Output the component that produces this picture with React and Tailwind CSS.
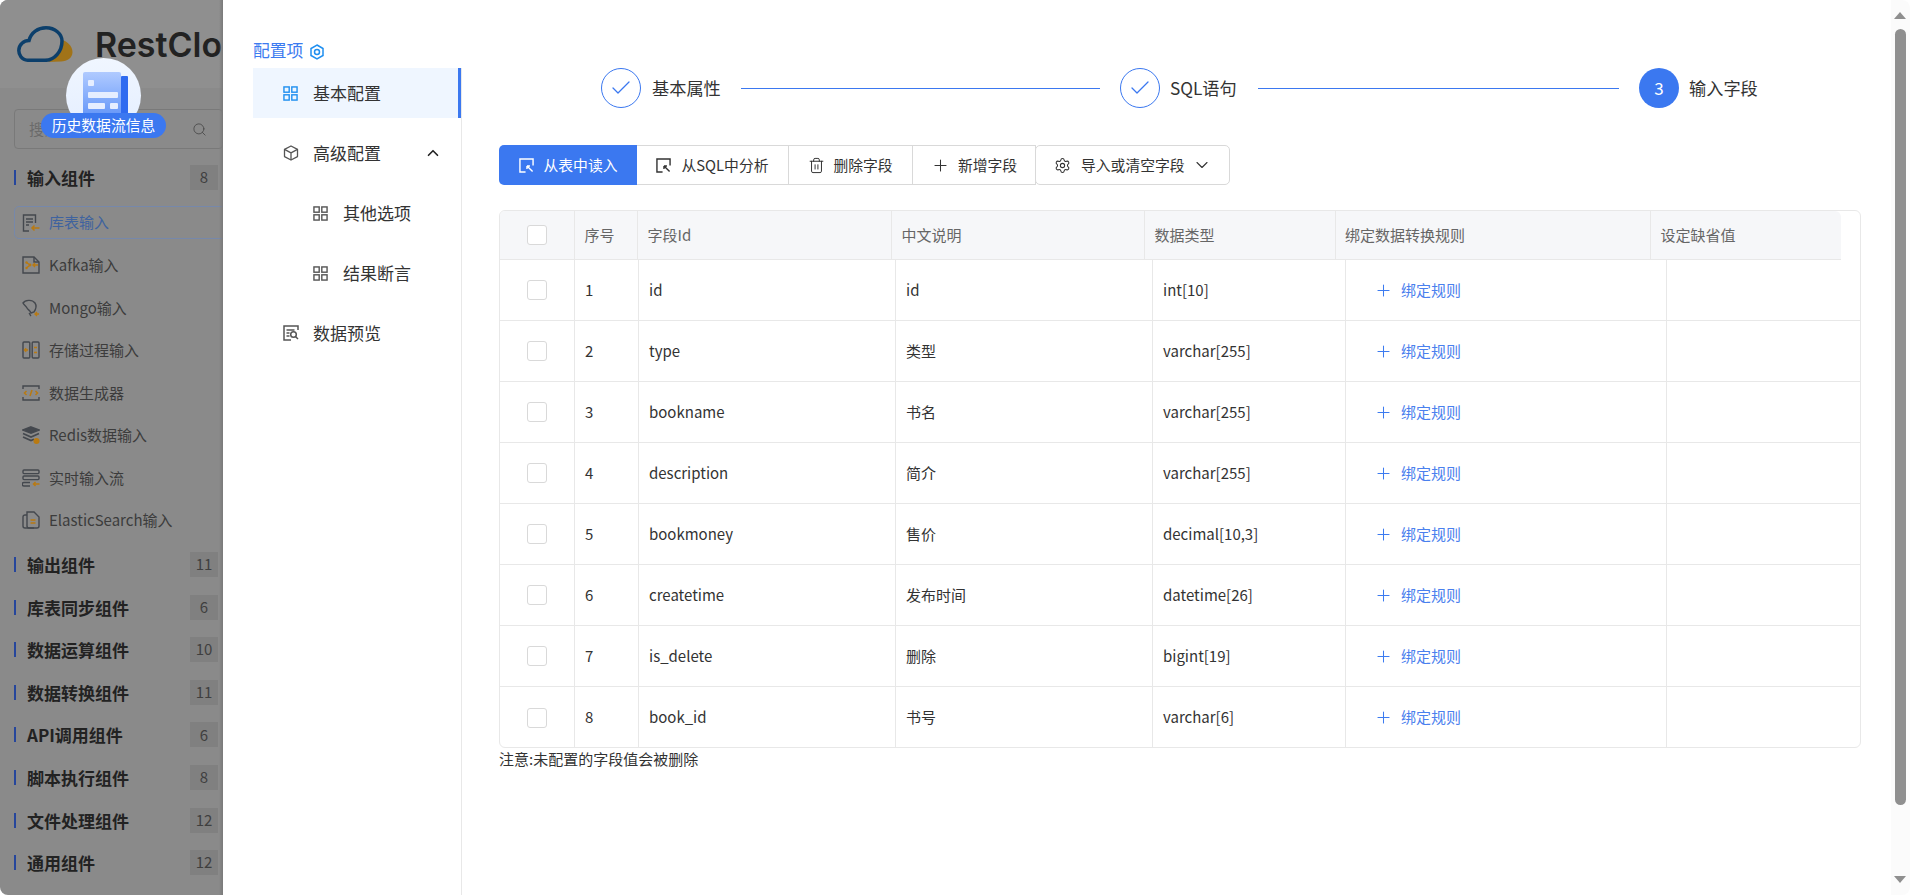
import React from "react";
import { Check, ChevronUp, ChevronDown, Plus, Search, Trash2, Settings } from "lucide-react";

const G = "#44484e";
const O = "#b97a12";

function GridIcon({ color = "#555", className = "" }) {
  return (
    <svg viewBox="0 0 16 16" className={className} fill="none" stroke={color} strokeWidth="1.5">
      <rect x="1" y="1" width="5.6" height="5.6" />
      <rect x="9.4" y="1" width="5.6" height="5.6" />
      <rect x="1" y="9.4" width="5.6" height="5.6" />
      <rect x="9.4" y="9.4" width="5.6" height="5.6" />
    </svg>
  );
}

function CubeIcon() {
  return (
    <svg viewBox="0 0 16 16" className="w-4 h-4" fill="none" stroke="#555" strokeWidth="1.3" strokeLinejoin="round">
      <path d="M8 1 14.5 4.4v7.2L8 15 1.5 11.6V4.4z" />
      <path d="M1.5 4.4 8 7.8l6.5-3.4M8 7.8V15" />
    </svg>
  );
}

function PreviewIcon() {
  return (
    <svg viewBox="0 0 16 16" className="w-4 h-4" fill="none" stroke="#555" strokeWidth="1.5">
      <path d="M15 5V1H1v14h7" />
      <path d="M3.5 5h8M3.5 8h3M3.5 11h3" />
      <circle cx="10.5" cy="9.5" r="2.8" />
      <path d="m12.5 11.5 2.5 2.5" />
    </svg>
  );
}

function ReadIcon({ color }) {
  return (
    <svg viewBox="0 0 16 16" className="w-[15px] h-[15px] shrink-0" fill="none" stroke={color} strokeWidth="1.5">
      <path d="M7 15H1V1h14v7" />
      <path d="m8.5 8.5 6 6M8.5 8.5v3.2M8.5 8.5h3.2" />
    </svg>
  );
}

function HexIcon() {
  return (
    <svg viewBox="0 0 14 16" className="w-[14px] h-[16px]" fill="none" stroke="#1f8ff0" strokeWidth="1.5">
      <path d="M7 1 13 4.5v7L7 15l-6-3.5v-7z" />
      <circle cx="7" cy="8" r="2.5" />
    </svg>
  );
}

function SideIcon({ kind }) {
  const common = { viewBox: "0 0 18 18", className: "w-[18px] h-[18px] shrink-0", fill: "none", strokeWidth: 1.4 };
  switch (kind) {
    case "table":
      return (
        <svg {...common} stroke={G}>
          <path d="M7 17H1.500V1h12v8" />
          <path d="M4 5h7M4 8h7M4 11h3" />
          <path d="M17.500 14H10m2.500-2.500L10 14l2.500 2.500" stroke={O} strokeWidth="1.500" />
        </svg>
      );
    case "kafka":
      return (
        <svg {...common} stroke={G}>
          <path d="M1 1h11l5 5v11H1z" />
          <path d="M12 1v5h5" />
          <circle cx="4.500" cy="6.500" r="1.200" fill={O} stroke="none" />
          <circle cx="4.500" cy="12" r="1.200" fill={O} stroke="none" />
          <circle cx="8" cy="9" r="1.400" fill={O} stroke="none" />
          <path d="M4.500 6.500 8 9l-3.500 3" stroke={O} />
          <path d="M16 9h-5m2-2-2 2 2 2" stroke={O} />
        </svg>
      );
    case "mongo":
      return (
        <svg {...common} stroke={G}>
          <path d="M1 4c2-3 9-4 12 0 2 3 1 6-1 9l-3 1c-1-3-3-3-4-5C4 7 2 6 1 4z" />
          <path d="M7 14c1 1 1 2 2 3" />
          <path d="M17 15h-4m2-2-2 2 2 2" stroke={O} />
        </svg>
      );
    case "proc":
      return (
        <svg {...common} stroke={G}>
          <rect x="1" y="1" width="6.800" height="16" rx="1" />
          <rect x="10.200" y="1" width="6.800" height="16" rx="1" />
          <path d="M6 9H2.500m1.700-1.700L2.500 9l1.700 1.700" stroke={O} />
          <path d="M12 6.500h3M12 11.500h3" stroke={O} strokeWidth="1.600" />
        </svg>
      );
    case "gen":
      return (
        <svg {...common} stroke={G}>
          <path d="M1 5V2h16v3M1 13v3h16v-3" />
          <path d="M4.500 7 2.500 9l2 2M13.500 7l2 2-2 2M10 6 8 12" stroke={O} strokeWidth="1.500" />
        </svg>
      );
    case "redis":
      return (
        <svg {...common} stroke={G} strokeWidth="1.700">
          <path d="M9 1 17 4 9 7 1 4z" fill={G} />
          <path d="M1 7.500 9 11l8-3.500M1 11l8 3.500 3-1.200" />
          <circle cx="14.500" cy="15" r="3" fill={O} stroke="none" />
        </svg>
      );
    case "stream":
      return (
        <svg {...common} stroke={G}>
          <rect x="1" y="1" width="16" height="3.600" rx="1" />
          <rect x="1" y="7" width="16" height="3.600" rx="1" />
          <path d="M8 13.500H2a1 1 0 0 0 0 3.500h6" />
          <path d="M17.500 15h-6m2-2-2 2 2 2" stroke={O} strokeWidth="1.500" />
        </svg>
      );
    default:
      return (
        <svg {...common} stroke={G}>
          <path d="M5 1h7l5 5v9a2 2 0 0 1-2 2H7a2 2 0 0 1-2-2z" />
          <path d="M5 4H3a2 2 0 0 0-2 2v9a2 2 0 0 0 2 2h9" />
          <path d="M8.500 9h5M8.500 12h5" stroke={O} strokeWidth="1.500" />
        </svg>
      );
  }
}

function Section({ name, count, top }) {
  return (
    <div className={`flex items-center h-[25px] pl-[14px] pr-[5px] ${top}`}>
      <span className="w-[2px] h-[15px] bg-[#26469c] mr-[11px]" />
      <span className="flex-1 text-[17px] font-bold text-[#222] leading-[25px]">{name}</span>
      <span className="w-[28px] h-[25px] bg-[#808080] text-[#3f3f3f] text-[15px] flex items-center justify-center">{count}</span>
    </div>
  );
}

function Item({ kind, name }) {
  return (
    <div className="flex items-center h-[42.5px] pl-[22px]">
      <SideIcon kind={kind} />
      <span className="ml-[9px] text-[15px] text-[#3c3c3c] whitespace-nowrap">{name}</span>
    </div>
  );
}

function Sidebar() {
  return (
    <aside className="relative w-[223px] h-full shrink-0 bg-[#8a8a8a] overflow-hidden">
      <div className="h-[88px] bg-[#8f8f8f] flex items-start pl-[17px] pt-[26px]">
        <svg viewBox="0 0 56 36" className="w-[56px] h-[36px] shrink-0">
          <path d="M45 14C50 15 55.500 20 55.500 26 55.500 32 50 35.500 44 35.500L30 36C38 34 46 26 45 14Z" fill="#a17318" />
          <path d="M12 34.300C4 34.300 1.800 28 1.800 24.500 1.800 18.500 7 14.500 12 14.500 14 6.500 21 1.800 29 1.800 38 1.800 45 8 45 15 45 25 38 34.300 28 34.300Z" fill="#8f8f8f" stroke="#0c3f6b" strokeWidth="3.500" />
        </svg>
        <span className="ml-[22px] -mt-[4px] text-[34px] font-semibold text-[#222] leading-[46px] whitespace-nowrap" style={{ fontFamily: 'Inter,"Noto Sans",sans-serif' }}>RestCloud</span>
      </div>
      <div className="mx-[14px] mt-[21px] w-[209px] h-[40px] border border-[#797979] rounded-[4px] flex items-center px-[14px] justify-between">
        <span className="text-[15px] text-[#6b6b6b]">搜索组件</span>
        <Search className="w-[15px] h-[15px] text-[#4a4a4a] mr-[1px]" strokeWidth={1.4} />
      </div>
      <Section name="输入组件" count="8" top="mt-[16px]" />
      <div className="ml-[14px] mt-[16px] h-[33px] w-[222px] border border-[#7688ab] rounded-[5px] flex items-center pl-[7px]">
        <SideIcon kind="table" />
        <span className="ml-[9px] text-[15px] text-[#3f639f]">库表输入</span>
      </div>
      <div className="mt-[5px]">
        <Item kind="kafka" name="Kafka输入" />
        <Item kind="mongo" name="Mongo输入" />
        <Item kind="proc" name="存储过程输入" />
        <Item kind="gen" name="数据生成器" />
        <Item kind="redis" name="Redis数据输入" />
        <Item kind="stream" name="实时输入流" />
        <Item kind="file" name="ElasticSearch输入" />
      </div>
      <Section name="输出组件" count="11" top="mt-[10.5px]" />
      <Section name="库表同步组件" count="6" top="mt-[17.6px]" />
      <Section name="数据运算组件" count="10" top="mt-[17.6px]" />
      <Section name="数据转换组件" count="11" top="mt-[17.6px]" />
      <Section name="API调用组件" count="6" top="mt-[17.6px]" />
      <Section name="脚本执行组件" count="8" top="mt-[17.6px]" />
      <Section name="文件处理组件" count="12" top="mt-[17.6px]" />
      <Section name="通用组件" count="12" top="mt-[17.6px]" />
      <div className="absolute top-0 right-0 w-[4px] h-full bg-gradient-to-r from-transparent to-[#7a7a7a]" />
    </aside>
  );
}

function Floating() {
  return (
    <>
      <div className="absolute left-[66px] top-[58px] w-[75px] h-[75px] rounded-full bg-gradient-to-b from-[#f0f6ff] to-[#e4eeff] overflow-hidden flex justify-center">
        <div className="relative w-[45px] h-[50px] mt-[14px] ml-[4px]">
          <div className="absolute right-0 top-[4px] w-[7px] h-[46px] bg-[#2f6bf0] rounded-[1px]" />
          <div className="absolute left-0 top-0 w-[38px] h-[50px] rounded-[2px] bg-gradient-to-b from-[#b0caff] to-[#5b8ff6]">
            <div className="absolute left-[5px] top-[8px] w-[6px] h-[6px] bg-[#e6eeff] rounded-[1px]" />
            <div className="absolute left-[5px] top-[20px] w-[30px] h-[6px] bg-[#e6eeff] rounded-[1px]" />
            <div className="absolute left-[5px] top-[31px] w-[17px] h-[6px] bg-[#e6eeff] rounded-[1px]" />
            <div className="absolute left-[27px] top-[31px] w-[8px] h-[6px] bg-[#e6eeff] rounded-[1px]" />
          </div>
        </div>
      </div>
      <div className="absolute left-[41px] top-[113px] w-[125px] h-[25px] rounded-full bg-[#3b78f0] text-white text-[14.8px] flex items-center justify-center whitespace-nowrap">
        历史数据流信息
      </div>
    </>
  );
}

function Menu() {
  const row = "flex items-center text-[17px] text-[#333] whitespace-nowrap";
  return (
    <div className="w-[209px] shrink-0 ml-[30px] pt-[38px] h-full">
      <div className="flex items-center h-[25px] text-[16.8px] text-[#3c7bf0]">
        配置项
        <span className="ml-[7px] mt-[3px] flex"><HexIcon /></span>
      </div>
      <div className="border-r border-[#e8e8e8] w-[209px] h-[832px]">
        <div className={`${row} h-[50px] mt-[5px] pl-[30px] bg-[#eff6ff] border-r-[3px] border-[#3b78f0] text-[#3c7bf0]`}>
          <GridIcon color="#1f8ff0" className="w-[15px] h-[15px]" />
          <span className="ml-[15px]">基本配置</span>
        </div>
        <div className={`${row} h-[50px] mt-[10px] pl-[30px]`}>
          <CubeIcon />
          <span className="ml-[14px]">高级配置</span>
          <ChevronUp className="w-[18px] h-[18px] ml-[43px] text-[#222]" strokeWidth={2.2} />
        </div>
        <div className={`${row} h-[50px] mt-[10px] pl-[60px]`}>
          <GridIcon color="#555" className="w-[15px] h-[15px]" />
          <span className="ml-[15px]">其他选项</span>
        </div>
        <div className={`${row} h-[50px] mt-[10px] pl-[60px]`}>
          <GridIcon color="#555" className="w-[15px] h-[15px]" />
          <span className="ml-[15px]">结果断言</span>
        </div>
        <div className={`${row} h-[50px] mt-[10px] pl-[30px]`}>
          <PreviewIcon />
          <span className="ml-[14px]">数据预览</span>
        </div>
      </div>
    </div>
  );
}

function CheckCircle() {
  return (
    <span className="w-[40px] h-[40px] rounded-full border border-[#3b78f0] flex items-center justify-center shrink-0">
      <Check className="w-[24px] h-[24px] text-[#3b78f0]" strokeWidth={1.3} />
    </span>
  );
}

function Steps() {
  return (
    <div className="flex items-center h-[40px] mt-[68px] ml-[102px] w-[1200px]">
      <CheckCircle />
      <span className="ml-[11px] w-[69px] shrink-0 text-[17.2px] text-[#333] whitespace-nowrap">基本属性</span>
      <span className="w-[359px] h-[1px] bg-[#3b78f0] ml-[20px] mr-[20px] shrink-0" />
      <CheckCircle />
      <span className="ml-[10px] w-[78px] shrink-0 text-[17.2px] text-[#333] whitespace-nowrap">SQL语句</span>
      <span className="w-[361px] h-[1px] bg-[#3b78f0] ml-[10px] mr-[20px] shrink-0" />
      <span className="w-[40px] h-[40px] rounded-full bg-[#3b78f0] text-white text-[17px] flex items-center justify-center shrink-0">3</span>
      <span className="ml-[10px] text-[17.2px] text-[#333] whitespace-nowrap">输入字段</span>
    </div>
  );
}

function Toolbar() {
  const btn = "h-[40px] flex items-center justify-center text-[14.8px] whitespace-nowrap shrink-0";
  const plain = `${btn} border-t border-b border-r border-[#d9d9d9] text-[#333]`;
  return (
    <div className="flex mt-[37px] h-[40px]">
      <div className={`${btn} w-[138px] bg-[#3b78f0] text-white rounded-l-[5px]`}>
        <ReadIcon color="#fff" /><span className="ml-[10px]">从表中读入</span>
      </div>
      <div className={`${plain} w-[152px]`}>
        <ReadIcon color="#333" /><span className="ml-[10px]">从SQL中分析</span>
      </div>
      <div className={`${plain} w-[124px]`}>
        <Trash2 className="w-[17px] h-[17px]" strokeWidth={1.4} /><span className="ml-[8px]">删除字段</span>
      </div>
      <div className={`${plain} w-[123px]`}>
        <Plus className="w-[19px] h-[19px]" strokeWidth={1.3} /><span className="ml-[8px]">新增字段</span>
      </div>
      <div className={`${btn} !justify-start pl-[18px] w-[195px] border border-[#d9d9d9] rounded-[5px] text-[#333] bg-white -ml-[1px]`}>
        <Settings className="w-[17px] h-[17px]" strokeWidth={1.5} /><span className="ml-[10px]">导入或清空字段</span>
        <ChevronDown className="w-[20px] h-[20px] ml-[7px]" strokeWidth={1.3} />
      </div>
    </div>
  );
}

const ROWS = [
  ["1", "id", "id", "int[10]"],
  ["2", "type", "类型", "varchar[255]"],
  ["3", "bookname", "书名", "varchar[255]"],
  ["4", "description", "简介", "varchar[255]"],
  ["5", "bookmoney", "售价", "decimal[10,3]"],
  ["6", "createtime", "发布时间", "datetime[26]"],
  ["7", "is_delete", "删除", "bigint[19]"],
  ["8", "book_id", "书号", "varchar[6]"],
];

function Box() {
  return <span className="block w-[20px] h-[20px] border border-[#d9d9d9] rounded-[3px] bg-white" />;
}

function Table() {
  const h = "h-full flex items-center pl-[9.5px] border-r border-[#e8e8e8] text-[15px] text-[#666] shrink-0";
  const c = "h-full flex items-center pl-[10px] border-r border-[#e8e8e8] text-[15px] text-[#333] shrink-0";
  return (
    <div className="mt-[25px] w-[1362px] h-[538px] border border-[#e8e8e8] rounded-[6px] overflow-hidden">
      <div className="flex h-[49px] w-[1341px] bg-[#f6f7f9] border-b border-[#e8e8e8] rounded-tr-[6px]">
        <div className={`${h} w-[75px] !pl-[27px]`}><Box /></div>
        <div className={`${h} w-[63px]`}>序号</div>
        <div className={`${h} w-[254px]`}>字段Id</div>
        <div className={`${h} w-[253px]`}>中文说明</div>
        <div className={`${h} w-[191px]`}>数据类型</div>
        <div className={`${h} w-[315px] !pl-[9px]`}>绑定数据转换规则</div>
        <div className={`${h} w-[190px] border-r-0`}>设定缺省值</div>
      </div>
      {ROWS.map((r, i) => (
        <div key={r[0]} className={`flex h-[61px] ${i < 7 ? "border-b border-[#e8e8e8]" : ""}`}>
          <div className={`${c} w-[75px] !pl-[27px]`}><Box /></div>
          <div className={`${c} w-[64px]`}>{r[0]}</div>
          <div className={`${c} w-[257px]`}>{r[1]}</div>
          <div className={`${c} w-[257px]`}>{r[2]}</div>
          <div className={`${c} w-[193px]`}>{r[3]}</div>
          <div className={`${c} w-[321px] !pl-[28px]`}>
            <Plus className="w-[19px] h-[19px] text-[#3c7bf0]" strokeWidth={1.3} />
            <span className="ml-[8px] text-[#4a80ee]">绑定规则</span>
          </div>
          <div className="flex-1" />
        </div>
      ))}
    </div>
  );
}

function Scrollbar() {
  return (
    <div className="absolute right-0 top-0 w-[19px] h-full bg-[#fbfbfb]">
      <div className="absolute left-[3px] top-[12px] w-0 h-0 border-l-[6.5px] border-r-[6.5px] border-b-[7px] border-l-transparent border-r-transparent border-b-[#8f8f8f]" />
      <div className="absolute left-[4px] top-[29px] w-[11px] h-[776px] rounded-full bg-[#8f8f8f]" />
      <div className="absolute left-[3px] top-[876px] w-0 h-0 border-l-[6.5px] border-r-[6.5px] border-t-[7px] border-l-transparent border-r-transparent border-t-[#8f8f8f]" />
    </div>
  );
}

export default function App() {
  return (
    <div
      className="relative w-[1910px] h-[895px] bg-white overflow-hidden"
      style={{ fontFamily: '"Noto Sans CJK SC","Noto Sans",sans-serif' }}
    >
      <div className="relative w-full h-full rounded-[8px] overflow-hidden flex bg-white">
        <Sidebar />
        <Menu />
        <main className="flex-1 min-w-0 pl-[37px]">
          <Steps />
          <Toolbar />
          <Table />
          <div className="text-[15px] text-[#333] leading-[21px]">注意:未配置的字段值会被删除</div>
        </main>
        <Scrollbar />
        <Floating />
      </div>
    </div>
  );
}
